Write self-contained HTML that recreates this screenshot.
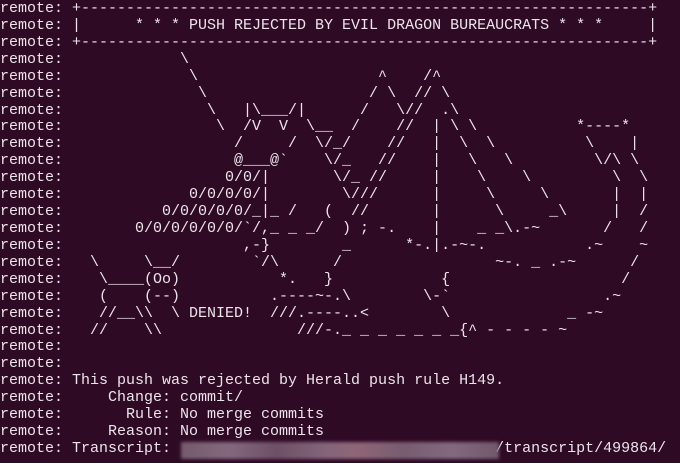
<!DOCTYPE html>
<html><head><meta charset="utf-8"><style>
html,body{margin:0;padding:0;background:#2f0a25;width:680px;height:463px;overflow:hidden}
pre{margin:0;padding-top:1px;font-family:"Liberation Mono","DejaVu Sans Mono",monospace;font-size:15px;line-height:16.92px;color:#ece4ea;white-space:pre;position:relative}
.blur{position:absolute;left:181px;top:442px;width:318px;height:17px;background:linear-gradient(90deg,#7d6476 0%,#8e7388 15%,#75586e 30%,#8c6f84 45%,#9a7080 55%,#80667a 70%,#8d7489 85%,#7a6074 100%);filter:blur(1.5px);opacity:.9}
</style></head><body>
<pre>remote: +---------------------------------------------------------------+
remote: |      * * * PUSH REJECTED BY EVIL DRAGON BUREAUCRATS * * *     |
remote: +---------------------------------------------------------------+
remote:             \
remote:              \                    ^    /^
remote:               \                  / \  // \
remote:                \   |\___/|      /   \//  .\
remote:                 \  /V  V  \__  /    //  | \ \           *----*
remote:                   /     /  \/_/    //   |  \  \          \    |
remote:                   @___@`    \/_   //    |   \   \         \/\ \
remote:                  0/0/|       \/_ //     |    \    \         \  \
remote:              0/0/0/0/|        \///      |     \     \       |  |
remote:           0/0/0/0/0/_|_ /   (  //       |      \     _\     |  /
remote:        0/0/0/0/0/0/`/,_ _ _/  ) ; -.    |    _ _\.-~       /   /
remote:                    ,-}        _      *-.|.-~-.           .~    ~
remote:   \     \__/        `/\      /                 ~-. _ .-~      /
remote:    \____(Oo)           *.   }            {                   /
remote:    (    (--)          .----~-.\        \-`                 .~
remote:    //__\\  \ DENIED!  ///.----..&lt;        \             _ -~
remote:   //    \\               ///-._ _ _ _ _ _ _{^ - - - - ~
remote:
remote:
remote: This push was rejected by Herald push rule H149.
remote:     Change: commit/
remote:       Rule: No merge commits
remote:     Reason: No merge commits
remote: Transcript:                                    /transcript/499864/
<div class="blur"></div></pre>
</body></html>
